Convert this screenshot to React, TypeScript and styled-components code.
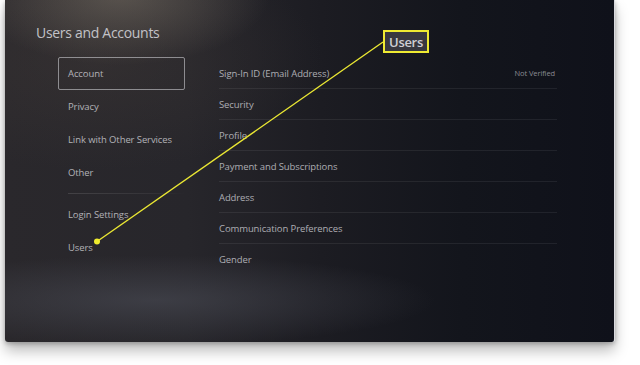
import styled, { createGlobalStyle } from "styled-components";

const Global = createGlobalStyle`
  html, body {
    margin: 0;
    padding: 0;
    background: #ffffff;
    overflow: hidden;
  }
  body {
    font-family: "Open Sans", "Noto Sans", sans-serif;
  }
`;

const Page = styled.div`
  width: 640px;
  height: 365px;
  padding: 0 25px 0 5px;
  box-sizing: border-box;
`;

const Screen = styled.div`
  position: relative;
  width: 610px;
  height: 342px;
  border-radius: 0 0 3px 3px;
  border-right: 1px solid #d8d9de;
  box-sizing: border-box;
  overflow: hidden;
  box-shadow: 0 9px 14px rgba(0, 0, 0, 0.26), 0 2px 4px rgba(0, 0, 0, 0.18), 0 0 6px rgba(0, 0, 0, 0.1);
  background:
    radial-gradient(ellipse 150px 70px at 115px -5px, rgba(125, 116, 104, 0.55), transparent),
    radial-gradient(ellipse 230px 110px at 90px 60px, rgba(70, 62, 58, 0.35), transparent),
    radial-gradient(ellipse 280px 45px at 150px 300px, rgba(78, 80, 90, 0.55), transparent),
    linear-gradient(90deg, #2a282c 0%, #27262b 30%, #1c1c22 52%, #13151c 75%, #0f111a 100%);
`;

const Title = styled.h1`
  margin: 24px 0 0 31px;
  font-size: 14px;
  line-height: 18px;
  font-weight: 400;
  letter-spacing: -0.3px;
  color: #c2c2c7;
`;

const Body = styled.div`
  display: flex;
  gap: 34px;
  margin: 15px 0 0 53px;
`;

const Nav = styled.div`
  width: 127px;
  display: flex;
  flex-direction: column;
`;

const NavItem = styled.div<{ $active?: boolean }>`
  height: 33px;
  box-sizing: border-box;
  display: flex;
  align-items: center;
  padding-left: 9px;
  font-size: 9.5px;
  letter-spacing: -0.1px;
  color: #b2b2b7;
  border: 1px solid ${({ $active }) => ($active ? "rgba(205, 205, 210, 0.6)" : "transparent")};
  border-radius: 2px;
`;

const NavDivider = styled.div`
  height: 1px;
  margin: 4px 0 4px 10px;
  background: linear-gradient(90deg, rgba(255, 255, 255, 0.12), rgba(255, 255, 255, 0.06) 70%, transparent);
`;

const List = styled.div`
  width: 338px;
  padding-top: 1px;
  display: flex;
  flex-direction: column;
`;

const Row = styled.div<{ $last?: boolean }>`
  height: 31px;
  box-sizing: border-box;
  display: flex;
  align-items: center;
  justify-content: space-between;
  font-size: 9.5px;
  letter-spacing: -0.1px;
  color: #adadb3;
  border-bottom: 1px solid ${({ $last }) => ($last ? "transparent" : "rgba(255, 255, 255, 0.07)")};
`;

const Status = styled.span`
  font-size: 7.5px;
  color: #8a8b92;
  margin-right: 2px;
`;

const Callout = styled.div`
  position: absolute;
  left: 378px;
  top: 30px;
  width: 46px;
  height: 23px;
  box-sizing: border-box;
  border: 2px solid #eeea32;
  background: #38383f;
  display: flex;
  align-items: center;
  justify-content: center;
  font-size: 13px;
  font-weight: 600;
  letter-spacing: -0.3px;
  color: #cfcfd4;
`;

const Pointer = styled.svg`
  position: absolute;
  left: 0;
  top: 0;
  pointer-events: none;
`;

const sections = ["Account", "Privacy", "Link with Other Services", "Other"];
const extras = ["Login Settings", "Users"];
const rows = [
  { label: "Sign-In ID (Email Address)", status: "Not Verified" },
  { label: "Security" },
  { label: "Profile" },
  { label: "Payment and Subscriptions" },
  { label: "Address" },
  { label: "Communication Preferences" },
  { label: "Gender" },
];

export default function App() {
  return (
    <>
      <Global />
      <Page>
        <Screen>
          <Title>Users and Accounts</Title>
          <Body>
            <Nav>
              {sections.map((s, i) => (
                <NavItem key={s} $active={i === 0}>
                  {s}
                </NavItem>
              ))}
              <NavDivider />
              {extras.map((s) => (
                <NavItem key={s}>{s}</NavItem>
              ))}
            </Nav>
            <List>
              {rows.map((r, i) => (
                <Row key={r.label} $last={i === rows.length - 1}>
                  {r.label}
                  {r.status && <Status>{r.status}</Status>}
                </Row>
              ))}
            </List>
          </Body>
          <Pointer width="610" height="342" viewBox="0 0 610 342">
            <line x1="378" y1="42" x2="92" y2="241.5" stroke="#ebe833" strokeWidth="1.4" />
            <circle cx="92" cy="241.5" r="3" fill="#f0ec2e" />
          </Pointer>
          <Callout>Users</Callout>
        </Screen>
      </Page>
    </>
  );
}
